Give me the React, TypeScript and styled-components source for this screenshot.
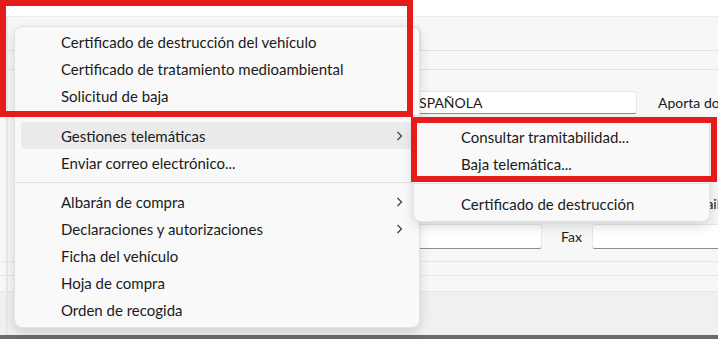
import React from 'react';
import styled, { createGlobalStyle } from 'styled-components';

const GlobalStyle = createGlobalStyle`
  html, body {
    margin: 0;
    padding: 0;
    background: #ffffff;
  }
  body {
    font-family: Lato, "Noto Sans", "DejaVu Sans", sans-serif;
    color: #1b1b1b;
  }
`;

const Screen = styled.div`
  position: relative;
  width: 718px;
  height: 339px;
  overflow: hidden;
  display: flex;
  flex-direction: column;
  background: #ffffff;
`;

const TopStrip = styled.div`
  height: 16px;
  background: #ffffff;
  flex: none;
`;

const Body = styled.div`
  flex: 1;
  display: flex;
  flex-direction: column;
  background: #f7f7f7;
  border-top: 1px solid #ebebeb;
  min-height: 0;
`;

const TabRow = styled.div`
  height: 34px;
  box-sizing: border-box;
  border-bottom: 1px solid #e3e3e3;
  display: flex;
  align-items: flex-end;
  flex: none;
`;

const Tab = styled.div`
  margin-left: 300px;
  width: 121px;
  height: 24px;
  box-sizing: border-box;
  background: #f9f9f9;
  border-top: 1px solid #e3e3e3;
  border-right: 1px solid #e3e3e3;
  border-top-right-radius: 6px;
`;

const SubStrip = styled.div`
  height: 19px;
  box-sizing: border-box;
  border-bottom: 1px solid #e3e3e3;
  flex: none;
`;

const Form = styled.div`
  display: flex;
  flex-direction: column;
  padding: 21px 0 0 404px;
  flex: none;
`;

const FieldRow = styled.div<{ $top?: number; $h: number }>`
  display: flex;
  align-items: center;
  height: ${(p) => p.$h}px;
  margin-top: ${(p) => p.$top ?? 0}px;
  white-space: nowrap;
  overflow: hidden;
`;

const TextBox = styled.div<{ $w: number; $gap?: number }>`
  width: ${(p) => p.$w}px;
  margin-left: ${(p) => p.$gap ?? 0}px;
  height: 100%;
  box-sizing: border-box;
  flex: none;
  background: #ffffff;
  border: 1px solid #e6e6e6;
  border-bottom: 1px solid #8c8c8c;
  border-radius: 3px;
  padding-left: 6px;
  display: flex;
  align-items: center;
  font-size: 14px;
  color: #1b1b1b;
`;

const Label = styled.span<{ $gap: number }>`
  margin-left: ${(p) => p.$gap}px;
  font-size: 14px;
  color: #1b1b1b;
  flex: none;
`;

const Rule = styled.div<{ $h: number }>`
  height: ${(p) => p.$h}px;
  box-sizing: border-box;
  border-bottom: 1px solid #e6e6e6;
  flex: none;
`;

const Filler = styled.div`
  flex: 1;
  background: #f0f0f0;
`;

const DarkBar = styled.div`
  height: 4px;
  background: #6b6b6b;
  flex: none;
`;

const SideLine = styled.div`
  position: absolute;
  left: 6px;
  top: 17px;
  bottom: 4px;
  width: 2px;
  background: #e8e8e8;
`;

const Menu = styled.div<{ $x: number; $y: number; $w: number; $pt: number }>`
  position: absolute;
  left: ${(p) => p.$x}px;
  top: ${(p) => p.$y}px;
  width: ${(p) => p.$w}px;
  box-sizing: border-box;
  padding: ${(p) => p.$pt}px 6px 4px;
  background: #f9f9f9;
  border: 1px solid #e2e2e2;
  border-radius: 8px;
  box-shadow: 0 4px 12px rgba(0, 0, 0, 0.14);
  display: flex;
  flex-direction: column;
`;

const Item = styled.div<{ $active?: boolean; $pl: number }>`
  height: 27px;
  display: flex;
  align-items: center;
  justify-content: space-between;
  padding: 0 10px 0 ${(p) => p.$pl}px;
  border-radius: 4px;
  background: ${(p) => (p.$active ? '#ebebeb' : 'transparent')};
  font-size: 15px;
  color: #1b1b1b;
  white-space: nowrap;
`;

const Separator = styled.div<{ $h: number }>`
  height: ${(p) => p.$h}px;
  display: flex;
  align-items: center;
  margin: 0 -6px;
  &::after {
    content: '';
    flex: 1;
    height: 1px;
    background: #e0e0e0;
  }
`;

const RedBox = styled.div<{ $x: number; $y: number; $w: number; $h: number }>`
  position: absolute;
  left: ${(p) => p.$x}px;
  top: ${(p) => p.$y}px;
  width: ${(p) => p.$w}px;
  height: ${(p) => p.$h}px;
  box-sizing: border-box;
  border: 6px solid #e61c1c;
  pointer-events: none;
`;

type Entry = { label?: string; sub?: boolean; active?: boolean; sep?: number };

const mainMenu: Entry[] = [
  { label: 'Certificado de destrucción del vehículo' },
  { label: 'Certificado de tratamiento medioambiental' },
  { label: 'Solicitud de baja' },
  { sep: 13 },
  { label: 'Gestiones telemáticas', sub: true, active: true },
  { label: 'Enviar correo electrónico...' },
  { sep: 12 },
  { label: 'Albarán de compra', sub: true },
  { label: 'Declaraciones y autorizaciones', sub: true },
  { label: 'Ficha del vehículo' },
  { label: 'Hoja de compra' },
  { label: 'Orden de recogida' },
];

const subMenu: Entry[] = [
  { label: 'Consultar tramitabilidad...' },
  { label: 'Baja telemática...' },
  { sep: 13 },
  { label: 'Certificado de destrucción' },
];

function Chevron() {
  return (
    <svg width="7" height="10" viewBox="0 0 7 10">
      <path d="M1.5 1 L5.5 5 L1.5 9" fill="none" stroke="#3c3c3c" strokeWidth="1.2" />
    </svg>
  );
}

function MenuList({ entries, pl }: { entries: Entry[]; pl: number }) {
  return (
    <>
      {entries.map((e, i) =>
        e.sep ? (
          <Separator key={i} $h={e.sep} />
        ) : (
          <Item key={i} $active={e.active} $pl={pl}>
            <span>{e.label}</span>
            {e.sub && <Chevron />}
          </Item>
        )
      )}
    </>
  );
}

export default function App() {
  return (
    <>
      <GlobalStyle />
      <Screen>
        <TopStrip />
        <Body>
          <TabRow>
            <Tab />
          </TabRow>
          <SubStrip />
          <Form>
            <FieldRow $h={23}>
              <TextBox $w={233}>ESPAÑOLA</TextBox>
              <Label $gap={21}>Aporta doc</Label>
            </FieldRow>
            <FieldRow $h={24} $top={77}>
              <Label $gap={283}>Email</Label>
            </FieldRow>
            <FieldRow $h={25} $top={9}>
              <TextBox $w={138} />
              <Label $gap={19}>Fax</Label>
              <TextBox $w={200} $gap={10} />
            </FieldRow>
          </Form>
          <Rule $h={13} />
          <Rule $h={14} />
          <Rule $h={16} />
          <Filler />
        </Body>
        <DarkBar />
        <SideLine />

        <Menu $x={14} $y={26} $w={406} $pt={1}>
          <MenuList entries={mainMenu} pl={40} />
        </Menu>
        <Menu $x={413} $y={118} $w={297} $pt={4}>
          <MenuList entries={subMenu} pl={41} />
        </Menu>

        <RedBox $x={0} $y={0} $w={413} $h={117} />
        <RedBox $x={411} $y={117} $w={306} $h={65} />
      </Screen>
    </>
  );
}
